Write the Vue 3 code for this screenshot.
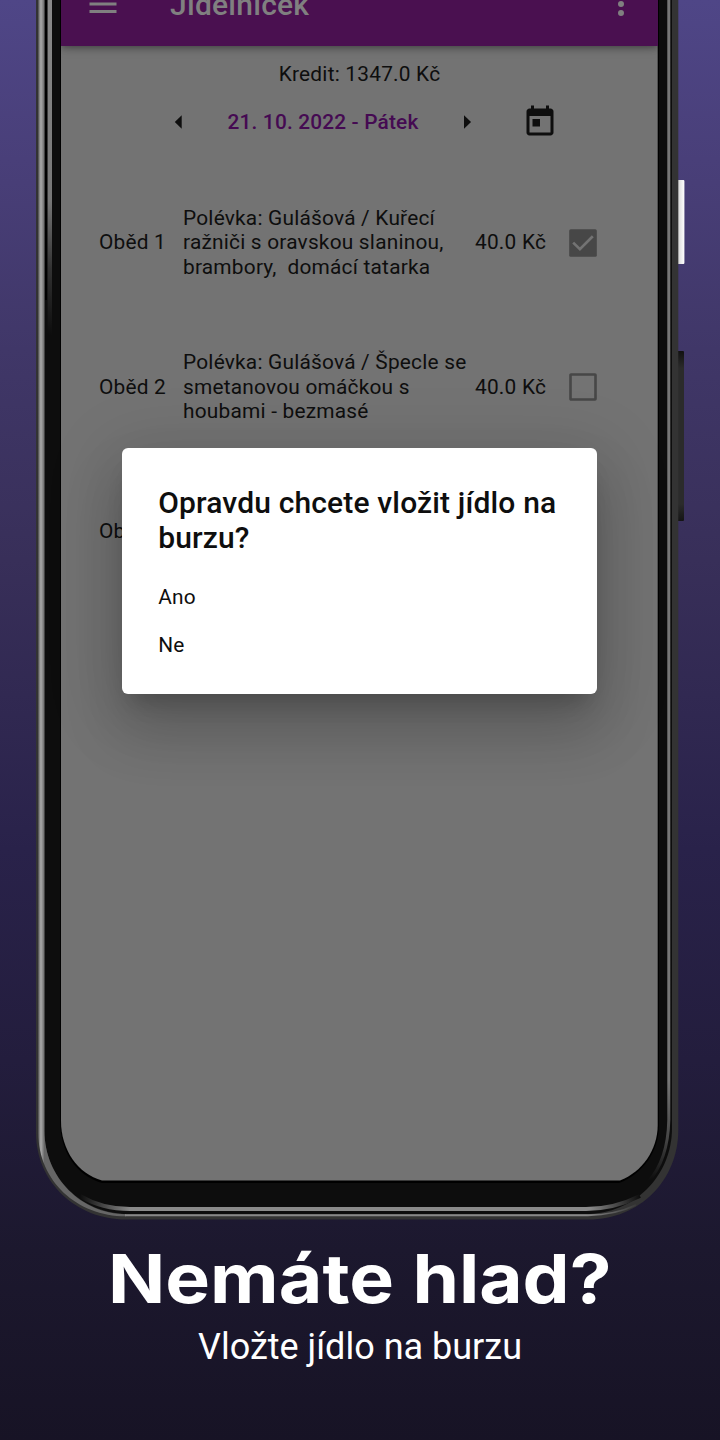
<script setup>
const meals = [
  { name: 'Oběd 1', text: 'Polévka: Gulášová / Kuřecí\nražniči s oravskou slaninou,\nbrambory,  domácí tatarka', price: '40.0 Kč', checked: true },
  { name: 'Oběd 2', text: 'Polévka: Gulášová / Špecle se\nsmetanovou omáčkou s\nhoubami - bezmasé', price: '40.0 Kč', checked: false },
  { name: 'Oběd 3', text: '', price: '', checked: null },
]
const answers = ['Ano', 'Ne']
</script>

<template>
  <main class="promo">
    <svg class="frame" width="720" height="1240" viewBox="0 0 720 1240">
      <defs>
        <linearGradient id="rim" x1="38" x2="44.5" y1="0" y2="0" gradientUnits="userSpaceOnUse">
          <stop offset="0" stop-color="#5c5c5c" />
          <stop offset=".45" stop-color="#aaa" />
          <stop offset="1" stop-color="#666" />
        </linearGradient>
        <linearGradient id="leftFade" x1="0" x2="0" y1="0" y2="335" gradientUnits="userSpaceOnUse">
          <stop offset="0" stop-color="#8a8a8a" />
          <stop offset=".6" stop-color="#777" />
          <stop offset=".8" stop-color="#333" />
          <stop offset="1" stop-color="#0d0d0d" />
        </linearGradient>
        <linearGradient id="rightFade" x1="0" x2="0" y1="1080" y2="1180" gradientUnits="userSpaceOnUse">
          <stop offset="0" stop-color="#777" />
          <stop offset=".6" stop-color="#444" />
          <stop offset="1" stop-color="#0d0d0d" />
        </linearGradient>
        <linearGradient id="bottomFade" x1="80" x2="640" y1="0" y2="0" gradientUnits="userSpaceOnUse">
          <stop offset="0" stop-color="#0d0d0d" />
          <stop offset=".09" stop-color="#8a8a8a" />
          <stop offset=".91" stop-color="#8a8a8a" />
          <stop offset="1" stop-color="#0d0d0d" />
        </linearGradient>
        <linearGradient id="lipFade" x1="100" x2="640" y1="0" y2="0" gradientUnits="userSpaceOnUse">
          <stop offset="0" stop-color="#888" />
          <stop offset=".9" stop-color="#888" />
          <stop offset="1" stop-color="#333" />
        </linearGradient>
        <linearGradient id="keyLight" x1="0" x2="1" y1="0" y2="0">
          <stop offset="0" stop-color="#bcbcbc" />
          <stop offset=".4" stop-color="#e4e4e4" />
          <stop offset="1" stop-color="#fff" />
        </linearGradient>
        <linearGradient id="keyDark" x1="0" x2="0" y1="0" y2="1">
          <stop offset="0" stop-color="#111" />
          <stop offset=".1" stop-color="#2b2b2b" />
          <stop offset=".9" stop-color="#2b2b2b" />
          <stop offset="1" stop-color="#141414" />
        </linearGradient>
      </defs>
      <rect x="677" y="180" width="7.4" height="84" rx="1" fill="url(#keyLight)" />
      <rect x="677" y="351" width="7" height="170" rx="1" fill="url(#keyDark)" />
      <path d="M36 0V1133C36 1182 76 1219.5 126 1219.5H588C640 1219.5 678.3 1180 678.3 1130V0Z" fill="#333" />
      <path d="M44.5 0V1131C44.5 1178 82 1214 128 1214H586C634 1214 672 1176 672 1128V0Z" fill="#0d0d0d" />
      <path d="M38.3 0V1133C38.3 1181 77 1216.3 126 1216.3V1214.2C82 1214 44.5 1178 44.5 1131V0Z" fill="url(#rim)" />
      <path d="M125 1215.2H588Q615 1215 636 1205" fill="none" stroke="url(#lipFade)" stroke-width="1.9" />
      <path d="M46 0V300" stroke="#000" stroke-width="2" />
      <rect x="47.6" y="0" width="4.4" height="335" fill="url(#leftFade)" />
      <path d="M668.8 0V1120Q668 1160 648 1182" fill="none" stroke="url(#rightFade)" stroke-width="3" />
      <path d="M80 1196Q102 1209 130 1209H586Q614 1209 640 1196" fill="none" stroke="url(#bottomFade)" stroke-width="3.8" />
      <path d="M60 0V1121C60 1152 77 1176 102 1183H619C643 1174 659 1151 659 1125V0Z" fill="#000" />
      <path d="M61 0V1121C61 1150 78 1174 102 1180.5H620C642 1172 657.7 1150 657.7 1125V0Z" fill="#737373" />
    </svg>

    <section class="screen">
      <header class="bar">
        <svg class="menu" viewBox="0 0 24 24"><path d="M3 18h18v-2H3v2zm0-5h18v-2H3v2zm0-7v2h18V6H3z" /></svg>
        <span class="bar-title">Jídelníček</span>
        <svg class="more" viewBox="0 0 24 24"><path d="M12 8a2 2 0 1 0 0-4 2 2 0 0 0 0 4zm0 2a2 2 0 1 0 0 4 2 2 0 0 0 0-4zm0 6a2 2 0 1 0 0 4 2 2 0 0 0 0-4z" /></svg>
      </header>

      <p class="credit">Kredit: 1347.0 Kč</p>
      <nav class="day">
        <svg viewBox="0 0 24 24"><path d="M13.8 7.5L9.2 12l4.6 4.5z" /></svg>
        <strong>21. 10. 2022 - Pátek</strong>
        <svg viewBox="0 0 24 24"><path d="M10 7.5l4.7 4.5-4.7 4.5z" /></svg>
        <svg class="calendar" viewBox="0 0 24 24"><path d="M19 3h-1V1h-2v2H8V1H6v2H5c-1.11 0-1.99.9-1.99 2L3 19c0 1.1.89 2 2 2h14c1.1 0 2-.9 2-2V5c0-1.1-.9-2-2-2zm0 16H5V8h14v11zM7 10h5v5H7z" /></svg>
      </nav>

      <ul class="meals">
        <li v-for="meal in meals" :key="meal.name">
          <span>{{ meal.name }}</span>
          <span class="description">{{ meal.text }}</span>
          <span>{{ meal.price }}</span>
          <svg v-if="meal.checked !== null" class="check" viewBox="0 0 28 28">
            <rect v-if="meal.checked" x=".2" y=".2" width="27.6" height="27.6" rx="1.5" fill="#474747" />
            <rect v-else x="1.5" y="1.5" width="25" height="25" rx=".5" fill="none" stroke="#474747" stroke-width="2.6" />
            <path v-if="meal.checked" d="M4.2 13.6l6.7 6.6L23.8 7.3" fill="none" stroke="#737373" stroke-width="2.7" />
          </svg>
        </li>
      </ul>

      <div class="dialog">
        <h2>Opravdu chcete vložit jídlo na burzu?</h2>
        <p v-for="answer in answers" :key="answer">{{ answer }}</p>
      </div>
    </section>

    <footer class="caption">
      <svg width="520" height="80" viewBox="100 1240 520 80">
        <text y="1303.3"><tspan x="108" textLength="286" lengthAdjust="spacingAndGlyphs">Nemáte</tspan><tspan x="412.5" textLength="199" lengthAdjust="spacingAndGlyphs">hlad?</tspan></text>
      </svg>
      <p>Vložte jídlo na burzu</p>
    </footer>
  </main>
</template>

<style>
body {
  margin: 0;
}
</style>

<style scoped>
.promo {
  position: relative;
  width: 720px;
  height: 1440px;
  overflow: hidden;
  background: linear-gradient(#4f4687 0, #493f79 160px, #403768 350px, #382f59 560px, #29224a 850px, #231d3d 1060px, #1c182e 1250px, #171325 1440px);
  font-family: Roboto, sans-serif;
  color: #0e0e0e;
}
p, h2, ul {
  margin: 0;
  padding: 0;
}
.frame {
  position: absolute;
  inset: 0;
}
.screen {
  position: relative;
  display: flow-root;
  width: 597px;
  height: 1181px;
  margin-left: 61px;
  font-size: 20.85px;
  line-height: 24.4px;
  letter-spacing: 0.22px;
}
.bar {
  box-sizing: border-box;
  display: flex;
  align-items: center;
  height: 84px;
  margin-top: -38px;
  padding: 0 19px 0 24px;
  background: #4a1050;
  box-shadow: 0 3px 6px -1px rgba(0, 0, 0, 0.32), 0 2px 12px rgba(0, 0, 0, 0.12);
  clip-path: inset(0 0 -20px 0);
}
.bar svg {
  width: 36px;
  height: 36px;
  fill: #808080;
}
.bar-title {
  flex: 1;
  margin-left: 49px;
  font-size: 30px;
  line-height: 35px;
  font-weight: 500;
  letter-spacing: 0.22px;
  color: #808080;
}
.credit {
  padding-top: 15.8px;
  text-align: center;
}
.day {
  display: flex;
  align-items: center;
  height: 36px;
  margin-top: 17.6px;
  padding-left: 100px;
}
.day svg {
  width: 36px;
  height: 36px;
  fill: #0e0e0e;
}
.day strong {
  width: 252px;
  text-align: center;
  font-weight: 500;
  letter-spacing: 0.17px;
  color: #450a52;
}
.day .calendar {
  margin-left: 36.5px;
}
.meals {
  margin-top: 30.6px;
  list-style: none;
}
.meals li {
  display: grid;
  grid-template-columns: 84px 292px 94px 28px;
  align-items: center;
  height: 144.4px;
  padding-left: 38px;
}
.description {
  white-space: pre;
}
.check {
  width: 28px;
  height: 28px;
}
.dialog {
  position: absolute;
  top: 447.5px;
  left: 60.5px;
  box-sizing: border-box;
  width: 475.5px;
  height: 246px;
  padding: 37.5px 36px 37.5px 36.7px;
  border-radius: 6px;
  background: #fff;
  box-shadow: 0 16px 22px -10px rgba(0, 0, 0, 0.2), 0 36px 57px 4px rgba(0, 0, 0, 0.14), 0 13px 69px 12px rgba(0, 0, 0, 0.12);
}
.dialog h2 {
  margin-bottom: 29.5px;
  font-size: 30px;
  line-height: 35px;
  font-weight: 500;
  letter-spacing: 0.15px;
}
.dialog p + p {
  margin-top: 24.3px;
}
.caption {
  position: relative;
  display: flex;
  flex-direction: column;
  align-items: center;
  padding-top: 59px;
  color: #fff;
}
.caption text {
  font: 750 68px Inter, sans-serif;
  fill: #fff;
}
.caption p {
  margin-top: 6px;
  font-size: 36px;
  line-height: 42px;
}
</style>
